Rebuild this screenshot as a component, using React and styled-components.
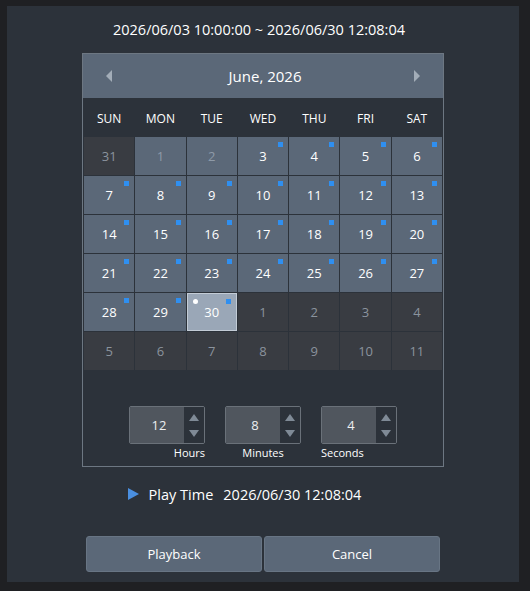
import React from 'react';
import styled, { createGlobalStyle, css } from 'styled-components';

const GlobalStyle = createGlobalStyle`
    html, body {
        margin: 0;
        padding: 0;
        background: #1f2023;
        font-family: "Open Sans", "Noto Sans", sans-serif;
        color: #ffffff;
    }
`;

const Dialog = styled.div`
    width: 512px;
    height: 576px;
    margin: 6px 0 0 7px;
    background: #2c323a;
    display: flex;
    flex-direction: column;
    align-items: center;
    box-sizing: border-box;
    padding-top: 14px;
`;

const Range = styled.div`
    font-size: 14.5px;
    line-height: 20px;
    height: 20px;
    margin-left: -8px;
    color: #ffffff;
`;

const Calendar = styled.div`
    margin-top: 13px;
    width: 362px;
    height: 414px;
    box-sizing: border-box;
    border: 1px solid #6d7782;
    display: flex;
    flex-direction: column;
`;

const MonthBar = styled.div`
    height: 44px;
    background: #5b6878;
    display: flex;
    align-items: center;
    justify-content: space-between;
    padding: 0 23px;
`;

const MonthLabel = styled.div`
    font-size: 15px;
    margin-left: 4px;
`;

const Arrow = styled.span`
    width: 0;
    height: 0;
    border-top: 6px solid transparent;
    border-bottom: 6px solid transparent;
    ${({ $dir }) => ($dir === 'left'
        ? css`border-right: 6px solid #a3adb8;`
        : css`border-left: 6px solid #a3adb8;`)}
`;

const WeekRow = styled.div`
    height: 39px;
    display: grid;
    grid-template-columns: repeat(7, 1fr);
    gap: 1px;
    padding: 0 1px;
    align-items: center;
    font-size: 12px;
    padding-top: 1px;
    box-sizing: border-box;
`;

const WeekDay = styled.div`
    text-align: center;
`;

const DayGrid = styled.div`
    display: grid;
    grid-template-columns: repeat(7, 1fr);
    grid-auto-rows: 38px;
    gap: 1px;
    padding: 0 1px;
`;

const Day = styled.div`
    position: relative;
    display: flex;
    align-items: center;
    justify-content: center;
    font-size: 13px;
    box-sizing: border-box;
    background: ${({ $kind }) => ($kind === 'selected' ? '#9aa7b7' : $kind === 'month' ? '#5b6878' : '#393c42')};
    color: ${({ $kind, $marked }) => ($kind === 'other' ? '#8b939d' : $marked ? '#ffffff' : '#8e9aa8')};
    ${({ $kind }) => $kind === 'selected' && css`border: 1px solid #c3ccd6;`}
`;

const Marker = styled.span`
    position: absolute;
    top: 5px;
    right: 5px;
    width: 5px;
    height: 5px;
    background: #2f8ff0;
`;

const TodayDot = styled.span`
    position: absolute;
    top: 5px;
    left: 5px;
    width: 5px;
    height: 5px;
    border-radius: 50%;
    background: #ffffff;
`;

const TimeArea = styled.div`
    margin-top: 36px;
    display: flex;
    flex-direction: column;
    align-items: center;
`;

const SpinnerRow = styled.div`
    display: flex;
    gap: 20px;
`;

const Spinner = styled.div`
    width: 76px;
    height: 38px;
    box-sizing: border-box;
    border: 1px solid #6a7179;
    border-radius: 2px;
    display: flex;
    overflow: hidden;
`;

const SpinValue = styled.div`
    flex: 1;
    background: #50565e;
    display: flex;
    align-items: center;
    justify-content: center;
    padding-left: 4px;
    font-size: 13px;
    color: #eceef0;
`;

const Stepper = styled.div`
    width: 20px;
    background: #2c323a;
    display: flex;
    flex-direction: column;
    align-items: center;
    justify-content: center;
    gap: 9px;
`;

const Tri = styled.span`
    width: 0;
    height: 0;
    border-left: 5px solid transparent;
    border-right: 5px solid transparent;
    ${({ $up }) => ($up
        ? css`border-bottom: 7px solid #7f8a96;`
        : css`border-top: 7px solid #7f8a96;`)}
`;

const LabelRow = styled.div`
    display: flex;
    gap: 20px;
    margin-top: 1px;
`;

const UnitLabel = styled.div`
    width: 76px;
    font-size: 11px;
    line-height: 16px;
    text-align: ${({ $align }) => $align};
`;

const PlayRow = styled.div`
    margin-top: 17px;
    height: 20px;
    display: flex;
    align-items: center;
    margin-left: -37px;
`;

const PlayIcon = styled.span`
    width: 0;
    height: 0;
    border-top: 6px solid transparent;
    border-bottom: 6px solid transparent;
    border-left: 11px solid #4a8fe0;
    margin-right: 10px;
`;

const PlayLabel = styled.span`
    font-size: 14.5px;
    margin-right: 10px;
`;

const PlayValue = styled.span`
    font-size: 14.5px;
`;

const Buttons = styled.div`
    margin-top: 32px;
    display: flex;
    gap: 2px;
`;

const Button = styled.button`
    width: 176px;
    height: 36px;
    background: #5b6878;
    border: 1px solid #687584;
    border-radius: 3px;
    color: #ffffff;
    font: inherit;
    font-size: 13px;
    cursor: pointer;
`;

const WEEK = ['SUN', 'MON', 'TUE', 'WED', 'THU', 'FRI', 'SAT'];

function buildDays() {
    const days = [{ n: 31, kind: 'other' }];
    for (let d = 1; d <= 30; d += 1) {
        days.push({
            n: d,
            kind: d === 30 ? 'selected' : 'month',
            marked: d >= 3,
            today: d === 30,
        });
    }
    for (let d = 1; d <= 11; d += 1) days.push({ n: d, kind: 'other' });
    return days;
}

function TimeSpinner({ value }) {
    return (
        <Spinner>
            <SpinValue>{value}</SpinValue>
            <Stepper>
                <Tri $up />
                <Tri />
            </Stepper>
        </Spinner>
    );
}

export default function App() {
    const days = buildDays();

    return (
        <>
            <GlobalStyle />
            <Dialog>
                <Range>2026/06/03 10:00:00 ~ 2026/06/30 12:08:04</Range>
                <Calendar>
                    <MonthBar>
                        <Arrow $dir="left" />
                        <MonthLabel>June, 2026</MonthLabel>
                        <Arrow $dir="right" />
                    </MonthBar>
                    <WeekRow>
                        {WEEK.map(w => <WeekDay key={w}>{w}</WeekDay>)}
                    </WeekRow>
                    <DayGrid>
                        {days.map((d, i) => (
                            <Day key={i} $kind={d.kind} $marked={d.marked}>
                                {d.today && <TodayDot />}
                                {d.n}
                                {d.marked && <Marker />}
                            </Day>
                        ))}
                    </DayGrid>
                    <TimeArea>
                        <SpinnerRow>
                            <TimeSpinner value={12} />
                            <TimeSpinner value={8} />
                            <TimeSpinner value={4} />
                        </SpinnerRow>
                        <LabelRow>
                            <UnitLabel $align="right">Hours</UnitLabel>
                            <UnitLabel $align="center">Minutes</UnitLabel>
                            <UnitLabel $align="left">Seconds</UnitLabel>
                        </LabelRow>
                    </TimeArea>
                </Calendar>
                <PlayRow>
                    <PlayIcon />
                    <PlayLabel>Play Time</PlayLabel>
                    <PlayValue>2026/06/30 12:08:04</PlayValue>
                </PlayRow>
                <Buttons>
                    <Button>Playback</Button>
                    <Button>Cancel</Button>
                </Buttons>
            </Dialog>
        </>
    );
}
